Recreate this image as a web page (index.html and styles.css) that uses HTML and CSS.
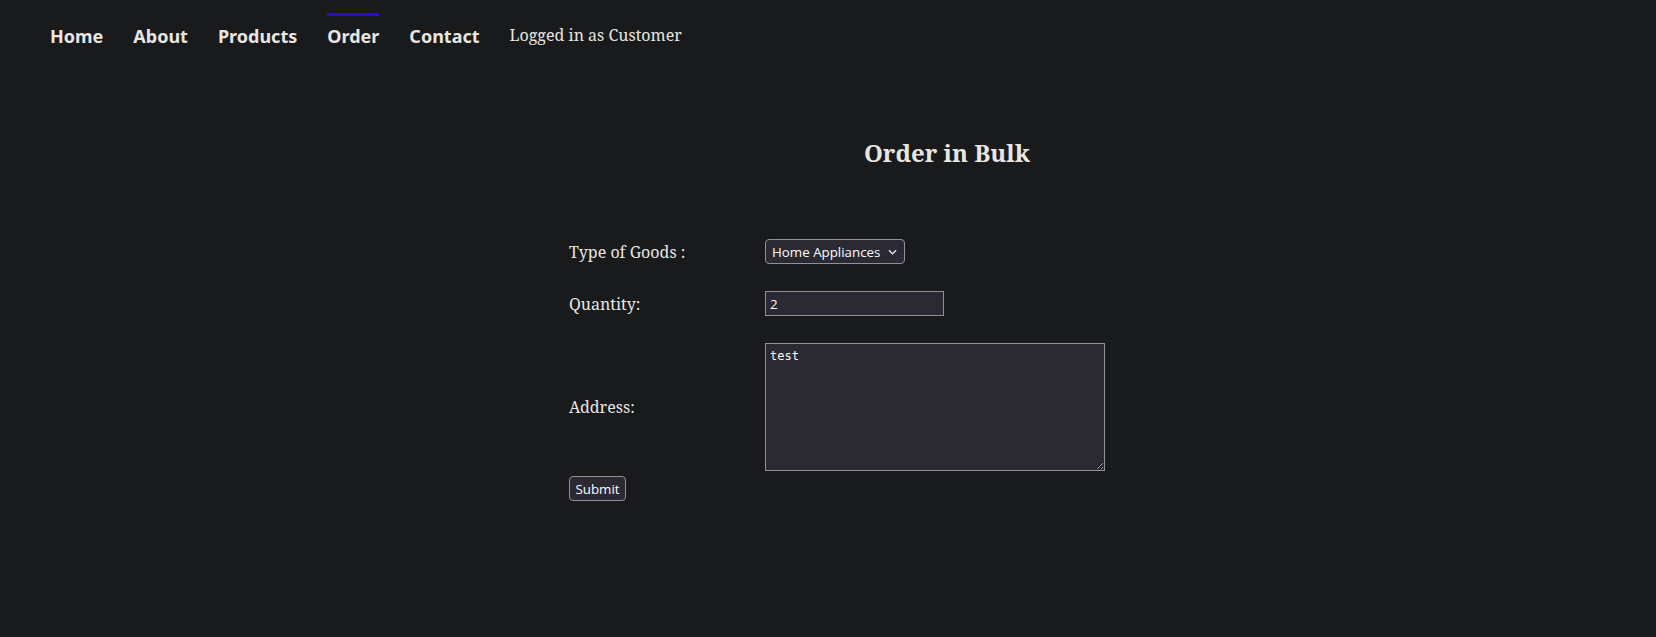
FILE: index.html
```html
<!DOCTYPE html>
<html lang="en">
<head>
<meta charset="utf-8">
<title>Order in Bulk</title>
<link rel="stylesheet" href="styles.css">
</head>
<body>
<nav class="topnav">
  <ul class="menu">
    <li><a class="menu-link" href="#">Home</a></li>
    <li><a class="menu-link" href="#">About</a></li>
    <li><a class="menu-link" href="#">Products</a></li>
    <li><a class="menu-link active" href="#">Order</a></li>
    <li><a class="menu-link" href="#">Contact</a></li>
    <li class="user">Logged in as Customer</li>
  </ul>
</nav>
<main class="order">
  <h2 class="title">Order in Bulk</h2>
  <form class="form">
    <label class="label" for="goods">Type of Goods :</label>
    <div class="field"><span class="select" id="goods">Home Appliances<svg class="chev" viewBox="0 0 10 6" width="9" height="6"><path d="M1 1l4 4 4-4" fill="none" stroke="#e8e6e3" stroke-width="1.4"/></svg></span></div>
    <label class="label row2" for="qty">Quantity:</label>
    <div class="field row2"><input class="input" id="qty" type="text" value="2"></div>
    <label class="label row3" for="addr">Address:</label>
    <div class="field row3"><textarea class="textarea" id="addr">test</textarea></div>
    <div class="row4"><button class="button" type="button">Submit</button></div>
  </form>
</main>
</body>
</html>
```
FILE: styles.css
```css
html, body {
  margin: 0;
  background: #181a1b;
  color: #e8e6e3;
  height: 100%;
}
body {
  font-family: "Noto Serif", "Liberation Serif", serif;
}
.topnav {
  padding: 13px 0 0 35px;
}
.menu {
  list-style: none;
  margin: 0;
  padding: 0;
  display: flex;
  align-items: flex-start;
}
.menu li {
  padding: 0 15px;
}
.menu-link {
  display: block;
  border-top: 3px solid transparent;
  padding-top: 8px;
  line-height: 24px;
  font-family: "Noto Sans", "Open Sans", sans-serif;
  font-weight: 700;
  font-size: 18px;
  color: #e8e6e3;
  text-decoration: none;
}
.menu-link.active {
  border-top-color: #2b0bbf;
}
.user {
  padding-top: 10px !important;
  font-size: 16px;
  line-height: 24px;
}
.order {
  padding-left: 569px;
  width: 756px;
}
.title {
  margin: 89px 0 0;
  text-align: center;
  font-size: 24px;
  line-height: 32px;
  font-weight: 700;
}
.form {
  display: grid;
  grid-template-columns: 196px auto;
  align-items: center;
  margin-top: 70px;
}
.label {
  font-size: 16px;
}
.field {
  display: flex;
}
.row2, .row3 {
  margin-top: 27px;
}
.row4 {
  grid-column: 1 / 3;
  margin-top: 5px;
}
.select, .input, .textarea, .button {
  background: #2b2a33;
  color: #fbfbfe;
  border: 1px solid #8f8f9d;
  font-family: "Open Sans", "Noto Sans", sans-serif;
  font-size: 13.333px;
  box-sizing: border-box;
}
.select {
  display: flex;
  align-items: center;
  gap: 8px;
  height: 25px;
  padding: 0 7px 0 6px;
  white-space: nowrap;
  border-radius: 4px;
}
.chev {
  display: block;
  flex: none;
}
.input {
  width: 179px;
  height: 25px;
  padding: 0 4px;
  border-radius: 0;
  outline: none;
}
.textarea {
  width: 340px;
  height: 128px;
  padding: 5px 4px 3px;
  font-family: "DejaVu Sans Mono", monospace;
  font-size: 12px;
  border-radius: 0;
  resize: both;
  outline: none;
}
.button {
  height: 25px;
  width: 57px;
  padding: 0;
  border-radius: 4px;
}
```
